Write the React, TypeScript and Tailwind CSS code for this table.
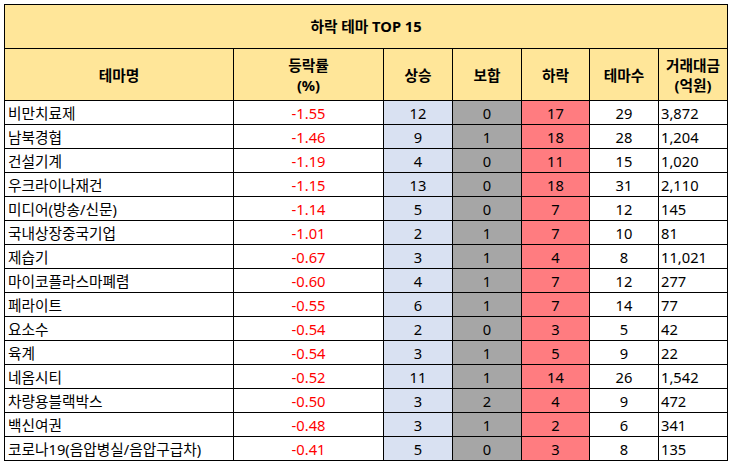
const rows: [string, string, number, number, number, number, string][] = [
  ["비만치료제", "-1.55", 12, 0, 17, 29, "3,872"],
  ["남북경협", "-1.46", 9, 1, 18, 28, "1,204"],
  ["건설기계", "-1.19", 4, 0, 11, 15, "1,020"],
  ["우크라이나재건", "-1.15", 13, 0, 18, 31, "2,110"],
  ["미디어(방송/신문)", "-1.14", 5, 0, 7, 12, "145"],
  ["국내상장중국기업", "-1.01", 2, 1, 7, 10, "81"],
  ["제습기", "-0.67", 3, 1, 4, 8, "11,021"],
  ["마이코플라스마폐렴", "-0.60", 4, 1, 7, 12, "277"],
  ["페라이트", "-0.55", 6, 1, 7, 14, "77"],
  ["요소수", "-0.54", 2, 0, 3, 5, "42"],
  ["육계", "-0.54", 3, 1, 5, 9, "22"],
  ["네옴시티", "-0.52", 11, 1, 14, 26, "1,542"],
  ["차량용블랙박스", "-0.50", 3, 2, 4, 9, "472"],
  ["백신여권", "-0.48", 3, 1, 2, 6, "341"],
  ["코로나19(음압병실/음압구급차)", "-0.41", 5, 0, 3, 8, "135"],
];

const cell = "border border-black";

export default function App() {
  return (
    <div
      className="w-[733px] h-[466px] bg-white p-1 text-[14.7px] text-black"
      style={{ fontFamily: '"Noto Sans", "Noto Sans CJK KR", sans-serif' }}
    >
      <table className="table-fixed border-collapse w-[724px]">
        <colgroup>
          <col className="w-[229px]" />
          <col className="w-[150px]" />
          <col className="w-[69px]" />
          <col className="w-[69px]" />
          <col className="w-[68px]" />
          <col className="w-[69px]" />
          <col className="w-[69px]" />
        </colgroup>
        <thead>
          <tr className="h-[44px] bg-[#ffe699]">
            <th colSpan={7} className={`${cell} font-bold text-center`}>
              하락 테마 TOP 15
            </th>
          </tr>
          <tr className="h-[52px] bg-[#ffe699] font-bold leading-[20px]">
            <th className={cell}>테마명</th>
            <th className={cell}>
              등락률
              <br />
              (%)
            </th>
            <th className={cell}>상승</th>
            <th className={cell}>보합</th>
            <th className={cell}>하락</th>
            <th className={cell}>테마수</th>
            <th className={cell}>
              거래대금
              <br />
              (억원)
            </th>
          </tr>
        </thead>
        <tbody>
          {rows.map(([name, rate, up, flat, down, count, amount]) => (
            <tr key={name} className="h-[24px] leading-[22px]">
              <td className={`${cell} pl-[3px] whitespace-nowrap`}>{name}</td>
              <td className={`${cell} text-center text-[#ff0000]`}>{rate}</td>
              <td className={`${cell} text-center bg-[#d9e1f2]`}>{up}</td>
              <td className={`${cell} text-center bg-[#a6a6a6]`}>{flat}</td>
              <td className={`${cell} text-center bg-[#ff7c80]`}>{down}</td>
              <td className={`${cell} text-center`}>{count}</td>
              <td className={`${cell} pl-[2px]`}>{amount}</td>
            </tr>
          ))}
        </tbody>
      </table>
    </div>
  );
}
